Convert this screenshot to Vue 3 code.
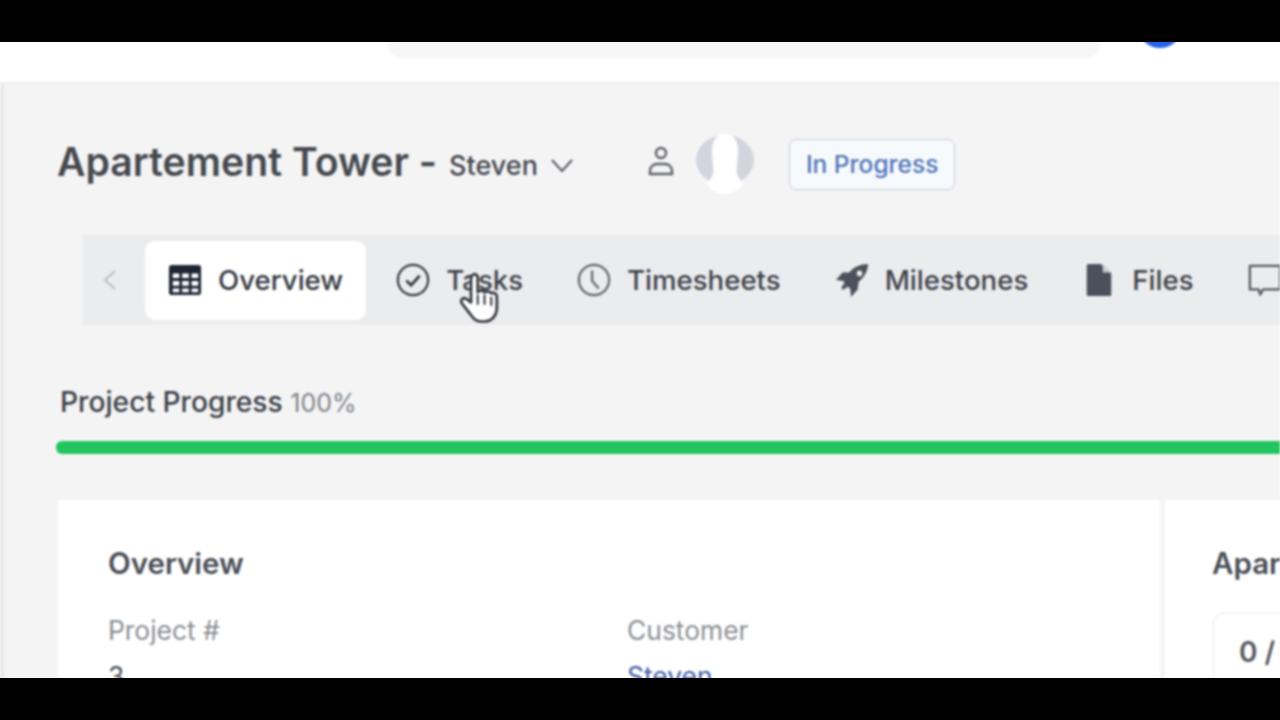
<template>
  <div class="screen">
    <div class="letterbox"></div>

    <div class="viewport">
      <div class="canvas">
        <header class="topbar">
          <div class="search"></div>
          <div class="user-dot"></div>
        </header>

        <main class="content">
          <div class="title-row">
            <h1 class="title">Apartement Tower -</h1>
            <span class="customer">Steven</span>
            <svg class="chevron" width="24" height="24" viewBox="0 0 24 24" fill="none" stroke="currentColor" stroke-width="2"><path d="M2 7l10 11L22 7" /></svg>
            <svg class="person" width="30" height="32" viewBox="0 0 30 32" fill="none" stroke="#5f6269" stroke-width="2.4"><circle cx="15" cy="8" r="5" /><path d="M4 29v-3c0-4 3-7 7-7h8c4 0 7 3 7 7v3z" /></svg>
            <div class="avatar">
              <svg width="60" height="60" viewBox="0 0 60 60"><ellipse cx="30" cy="26" rx="29" ry="25" fill="#d2d5de" /><path d="M30 0c-10 0-13 8-13 18 0 9 2 15 1 22-1 4-4 7-7 9 4 7 12 11 19 11s15-4 19-11c-3-2-6-5-7-9-1-7 1-13 1-22C43 8 40 0 30 0z" fill="#fff" /></svg>
            </div>
            <span class="status">In Progress</span>
          </div>

          <nav class="tabs">
            <svg class="back" width="16" height="24" viewBox="0 0 16 24" fill="none" stroke="#b9bdc3" stroke-width="2"><path d="M13 3L3 12l10 9" /></svg>
            <a v-for="tab in tabs" :key="tab.name" class="tab" :class="{ active: tab.active }">
              <svg class="tab-icon" width="34" height="34" viewBox="0 0 36 36" v-html="tab.icon"></svg>
              <span v-if="tab.label">{{ tab.label }}</span>
            </a>
          </nav>

          <div class="progress-label">Project Progress <span class="percent">100%</span></div>
          <div class="progress"><div class="progress-fill" :style="{ width: progress + '%' }"></div></div>

          <div class="panels">
            <section class="panel">
              <h2 class="panel-title">Overview</h2>
              <div class="fields">
                <div>
                  <div class="field-label">Project #</div>
                  <div class="field-value">3</div>
                </div>
                <div>
                  <div class="field-label">Customer</div>
                  <a class="field-link">Steven</a>
                </div>
              </div>
            </section>
            <section class="panel side">
              <h2 class="panel-title">Apartement Tower</h2>
              <div class="stat">0 / 0</div>
            </section>
          </div>
        </main>

        <svg class="cursor" width="48" height="54" viewBox="0 0 40 48">
          <path d="M13 3c2-2 5-1 5 2v13c1-2 5-2 6 0 2-1 5-1 6 1 2-1 5 0 5 3v9c0 7-4 13-11 13h-3c-5 0-7-3-10-7l-7-9c-2-3 1-6 4-4l4 3V5z" fill="#fff" stroke="#33363d" stroke-width="2.4" stroke-linejoin="round" />
          <path d="M18 20v9M24 20v9M30 22v8" stroke="#33363d" stroke-width="1.8" />
        </svg>
      </div>
    </div>

    <div class="letterbox"></div>
  </div>
</template>

<script setup>
const progress = 100

const tabs = [
  {
    name: 'overview',
    label: 'Overview',
    active: true,
    icon: '<path fill="#1d2533" fill-rule="evenodd" d="M4 2h28a3 3 0 0 1 3 3v26a3 3 0 0 1-3 3H4a3 3 0 0 1-3-3V5a3 3 0 0 1 3-3zm1 9v5h7v-5zm10 0v5h7v-5zm10 0v5h7v-5zM5 19v5h7v-5zm10 0v5h7v-5zm10 0v5h7v-5zM5 27v4h7v-4zm10 0v4h7v-4zm10 0v4h7v-4z"/>'
  },
  {
    name: 'tasks',
    label: 'Tasks',
    icon: '<circle cx="18" cy="18" r="16" fill="none" stroke="#383c44" stroke-width="2.4"/><path d="M11 18.5l5 5 9-10" fill="none" stroke="#383c44" stroke-width="3"/>'
  },
  {
    name: 'timesheets',
    label: 'Timesheets',
    icon: '<circle cx="18" cy="18" r="16" fill="none" stroke="#62666c" stroke-width="2.4"/><path d="M16 8v11l7 8" fill="none" stroke="#62666c" stroke-width="2.4"/>'
  },
  {
    name: 'milestones',
    label: 'Milestones',
    icon: '<path fill="#4b515c" fill-rule="evenodd" d="M35 1c-8 0-15 3-20 9H8l-7 8 8 1 1 3c-2 1-3 3-3 6 3 0 5-1 6-3l3 2 1 9 7-8 1-8c6-5 10-12 10-19zM26 8a3 3 0 1 1 0 6 3 3 0 0 1 0-6z"/>'
  },
  {
    name: 'files',
    label: 'Files',
    icon: '<path fill="#4b515c" d="M5 3a2 2 0 0 1 2-2h13l11 10v22a2 2 0 0 1-2 2H7a2 2 0 0 1-2-2z"/><path fill="#c9ccd2" d="M22 1l9 9h-9z"/>'
  },
  {
    name: 'discussions',
    label: '',
    icon: '<path fill="none" stroke="#55585f" stroke-width="2.4" d="M2 3h32v25H16l-3 5-2-5H2z"/>'
  }
]
</script>

<style scoped>
.screen {
  display: flex;
  flex-direction: column;
  width: 1280px;
  height: 720px;
  overflow: hidden;
  background: #000;
  font-family: Inter, "Liberation Sans", sans-serif;
  color: #3c4048;
}

.letterbox { height: 42px; flex: none; background: #000; }

.viewport {
  flex: 1;
  min-height: 0;
  overflow: hidden;
  background: #f4f4f5;
}

/* soft video look, the extra margin keeps the blur away from the black bars */
.canvas {
  position: relative;
  margin: -4px -4px 0;
  padding: 4px 4px 0;
  background: #fff;
  filter: blur(0.8px);
}

.topbar {
  position: relative;
  height: 40px;
  background: #fff;
  border-bottom: 2px solid #ececee;
  padding-left: 388px;
}

.search {
  width: 712px;
  height: 16px;
  background: #f6f6f7;
  border-radius: 0 0 14px 14px;
}

.user-dot {
  position: absolute;
  left: 1139px;
  top: -34px;
  width: 42px;
  height: 40px;
  border-radius: 50%;
  background: #2563eb;
}

.content {
  height: 598px;
  padding-left: 53px;
  background: #f4f4f5;
  border-left: 4px solid #e8e8ea;
  box-sizing: border-box;
  overflow: hidden;
}

.title-row {
  display: flex;
  align-items: center;
  height: 78px;
  margin-top: 39px;
}

.title {
  margin: -2px 0 0;
  font-size: 39.2px;
  font-weight: 600;
  color: #45494f;
  white-space: nowrap;
}

.customer {
  margin-left: 12px;
  margin-top: 6px;
  font-size: 27px;
  font-weight: 500;
  color: #45494f;
}

.chevron {
  margin-left: 12px;
  margin-top: 5px;
  color: #555962;
}

.person { margin-left: 72px; margin-top: -2px; }

.avatar {
  display: flex;
  width: 60px;
  height: 60px;
  margin-left: 19px;
  margin-top: 4px;
}

.status {
  box-sizing: border-box;
  margin-left: 34px;
  margin-top: 5px;
  padding: 0 16px;
  height: 51px;
  line-height: 48px;
  font-size: 24.5px;
  font-weight: 500;
  color: #5175b8;
  background: #f7fafd;
  border: 1.5px solid #c5cdd9;
  border-radius: 7px;
  white-space: nowrap;
}

.tabs {
  display: flex;
  align-items: center;
  width: 1240px;
  height: 90px;
  margin-left: 26px;
  margin-top: 34px;
  padding-left: 19px;
  background: #ebecee;
  box-sizing: border-box;
  white-space: nowrap;
}

.back { margin-right: 24px; flex: none; }

.tab {
  display: flex;
  flex: none;
  align-items: center;
  gap: 16px;
  height: 79px;
  padding: 0 27px;
  font-size: 27.6px;
  font-weight: 500;
  color: #3f434b;
  border-radius: 10px;
}

.tab.active {
  margin: 0 3px;
  padding: 0 23px;
  background: #fff;
  color: #343841;
}

.tab-icon { flex: none; }

.progress-label {
  margin-top: 60px;
  margin-left: 3px;
  font-size: 28.2px;
  font-weight: 500;
  color: #3d4149;
}

.percent { font-size: 25px; font-weight: 400; color: #7f8389; }

.progress {
  width: 1240px;
  height: 13px;
  margin-top: 22px;
  margin-left: -1px;
  background: #e5e7eb;
  border-radius: 6px 0 0 6px;
  overflow: hidden;
}

.progress-fill { height: 100%; background: #22c55e; }

.panels {
  display: grid;
  grid-template-columns: 1102px 400px;
  gap: 5px;
  margin-top: 46px;
  margin-left: 1px;
}

.panel {
  height: 300px;
  padding: 45px 50px;
  background: #fff;
  box-sizing: border-box;
}

.panel-title {
  margin: 0;
  font-size: 29.5px;
  font-weight: 600;
  color: #4a4e56;
  white-space: nowrap;
}

.fields {
  display: grid;
  grid-template-columns: 519px 1fr;
  margin-top: 33px;
  font-size: 26.4px;
}

.field-label { color: #8b8f95; }
.field-value { margin-top: 14px; color: #4a4e56; }
.field-link { display: block; margin-top: 14px; color: #3f5da8; }

.side { padding-left: 47px; }

.stat {
  width: 300px;
  height: 90px;
  margin-top: 32px;
  margin-left: 1px;
  padding: 21px 25px;
  box-sizing: border-box;
  border: 1.5px solid #ececee;
  border-radius: 10px;
  font-size: 28px;
  font-weight: 600;
  color: #55585f;
}

.cursor {
  position: absolute;
  left: 460px;
  top: 234px;
}
</style>

<style>
html, body { background: #000; overflow: hidden; }
</style>
